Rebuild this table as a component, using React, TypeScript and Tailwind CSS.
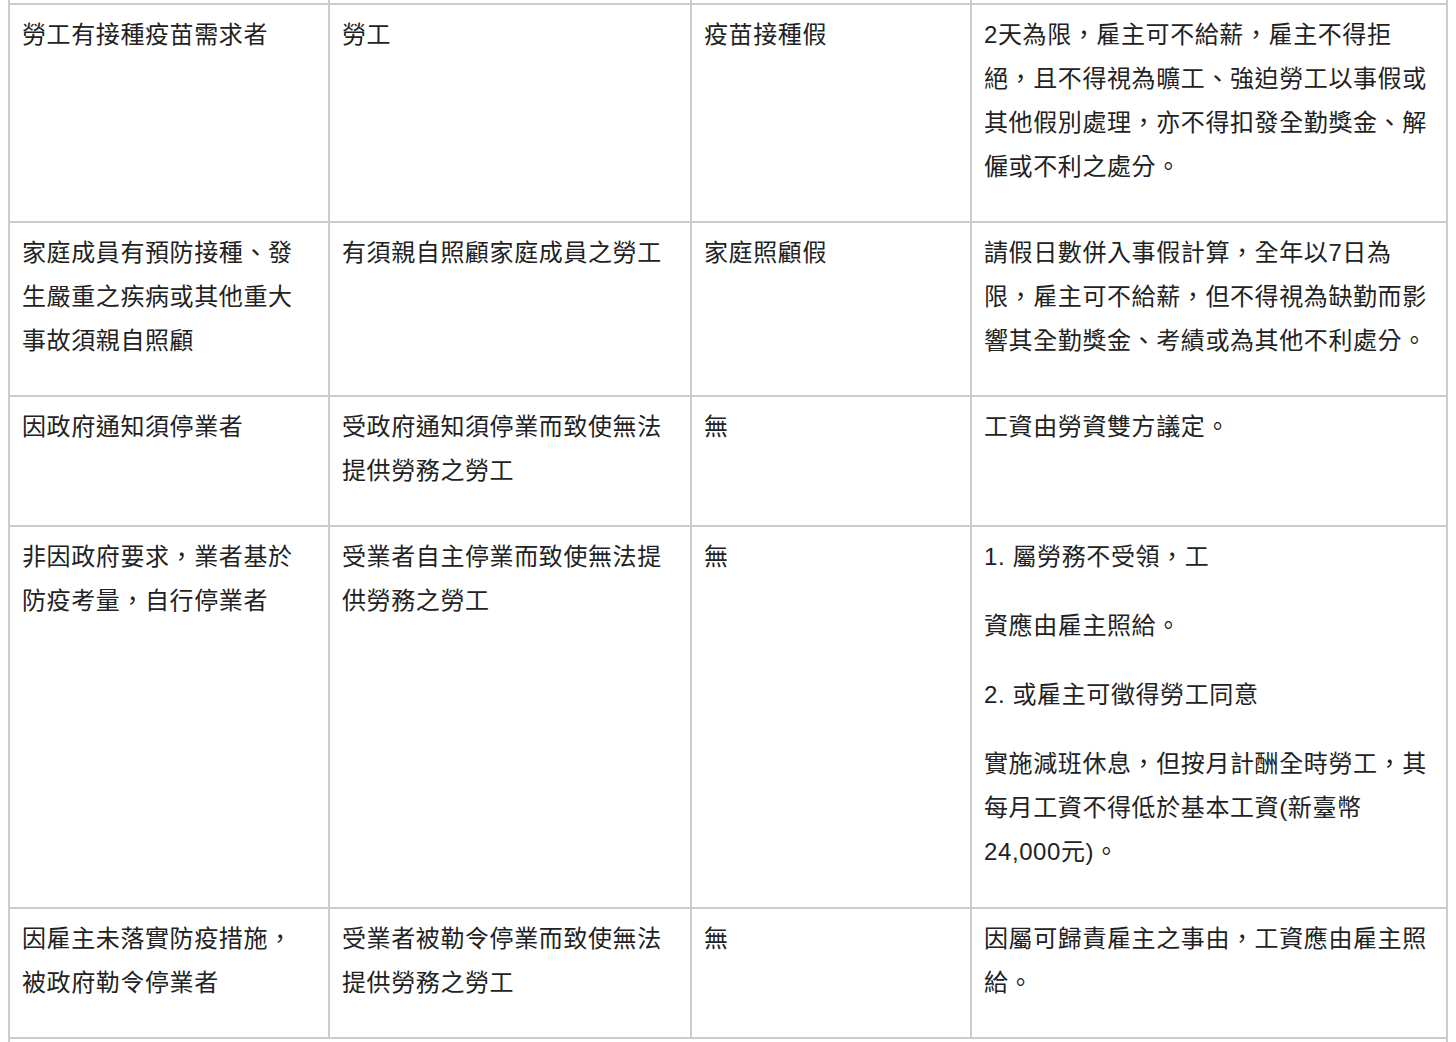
type Cell = string[][]; // paragraphs -> lines

interface Row {
  cells: Cell[];
  gap?: string;
}

const ROWS: Row[] = [
  {
    cells: [
      [['勞工有接種疫苗需求者']],
      [['勞工']],
      [['疫苗接種假']],
      [['2天為限，雇主可不給薪，雇主不得拒', '絕，且不得視為曠工、強迫勞工以事假或', '其他假別處理，亦不得扣發全勤獎金、解', '僱或不利之處分。']],
    ],
  },
  {
    cells: [
      [['家庭成員有預防接種、發', '生嚴重之疾病或其他重大', '事故須親自照顧']],
      [['有須親自照顧家庭成員之勞工']],
      [['家庭照顧假']],
      [['請假日數併入事假計算，全年以7日為', '限，雇主可不給薪，但不得視為缺勤而影', '響其全勤獎金、考績或為其他不利處分。']],
    ],
  },
  {
    cells: [
      [['因政府通知須停業者']],
      [['受政府通知須停業而致使無法', '提供勞務之勞工']],
      [['無']],
      [['工資由勞資雙方議定。']],
    ],
  },
  {
    gap: 'mb-[25px]',
    cells: [
      [['非因政府要求，業者基於', '防疫考量，自行停業者']],
      [['受業者自主停業而致使無法提', '供勞務之勞工']],
      [['無']],
      [
        ['1. 屬勞務不受領，工'],
        ['資應由雇主照給。'],
        ['2. 或雇主可徵得勞工同意'],
        ['實施減班休息，但按月計酬全時勞工，其', '每月工資不得低於基本工資(新臺幣', '24,000元)。'],
      ],
    ],
  },
  {
    cells: [
      [['因雇主未落實防疫措施，', '被政府勒令停業者']],
      [['受業者被勒令停業而致使無法', '提供勞務之勞工']],
      [['無']],
      [['因屬可歸責雇主之事由，工資應由雇主照', '給。']],
    ],
  },
];

const cellBorder = 'border-r-2 border-b-2 border-[#cccccc]';

export default function App() {
  return (
    <div
      className="h-[1042px] overflow-hidden bg-white text-[#222] text-[24px] leading-[44px] tracking-[0.6px]"
      style={{ fontFamily: '"Liberation Sans", "Noto Sans CJK TC", sans-serif' }}
    >
      <table className="ml-2 w-[1440px] table-fixed border-separate border-spacing-0">
        <colgroup>
          <col className="w-[322px]" />
          <col className="w-[362px]" />
          <col className="w-[280px]" />
          <col className="w-[476px]" />
        </colgroup>
        <tbody>
          {/* tail of the row above, cut off by the viewport */}
          <tr>
            {[0, 1, 2, 3].map((i) => (
              <td key={i} className={`h-[5px] p-0 ${cellBorder} ${i === 0 ? 'border-l-2' : ''}`} />
            ))}
          </tr>
          {ROWS.map((row, r) => (
            <tr key={r}>
              {row.cells.map((cell, c) => (
                <td key={c} className={`align-top px-3 py-2 ${cellBorder} ${c === 0 ? 'border-l-2' : ''}`}>
                  {cell.map((para, p) => (
                    <p key={p} className={row.gap ?? 'mb-6'}>
                      {para.map((line, l) => (
                        <span key={l} className="block whitespace-nowrap">
                          {line}
                        </span>
                      ))}
                    </p>
                  ))}
                </td>
              ))}
            </tr>
          ))}
          <tr>
            <td colSpan={4} className={`h-[60px] p-0 ${cellBorder} border-l-2`} />
          </tr>
        </tbody>
      </table>
    </div>
  );
}
